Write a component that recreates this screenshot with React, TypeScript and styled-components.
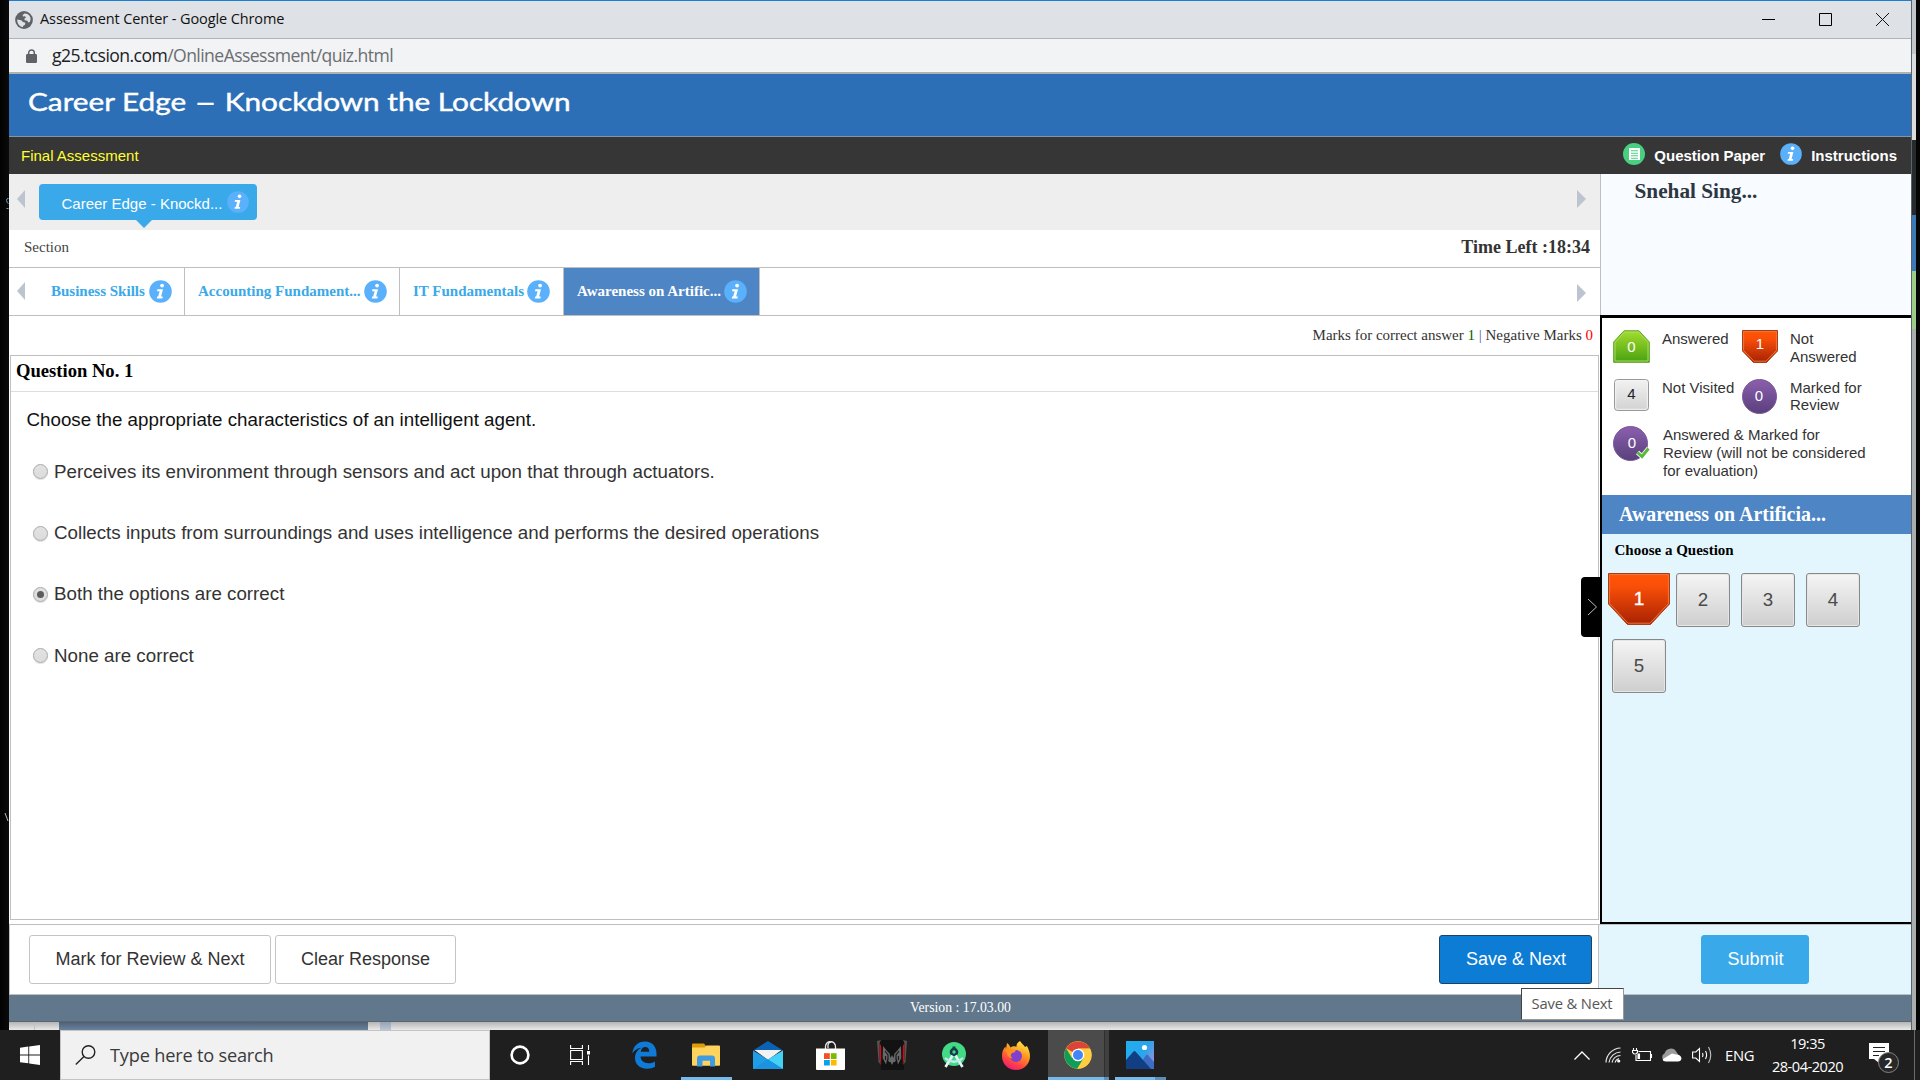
import React from 'react';
import styled, { createGlobalStyle, css } from 'styled-components';

const ARIAL = '"Liberation Sans", Arial, sans-serif';
const TIMES = '"Liberation Serif", "Times New Roman", serif';
const SEGOE = '"Open Sans", "Segoe UI", sans-serif';

const GlobalStyle = createGlobalStyle`
  * { box-sizing: border-box; }
  html, body { margin: 0; padding: 0; background: #050505; overflow: hidden; }
  svg { display: block; flex: none; }
`;

const Screen = styled.div`
  width: 1920px;
  height: 1080px;
  display: flex;
  flex-direction: column;
  background: #050505;
  overflow: hidden;
`;

const Desktop = styled.div`
  display: flex;
  height: 1030px;
`;

const LeftEdge = styled.div`
  width: 9px;
  background: linear-gradient(90deg, #020202, #0b0a0a);
  padding-top: 196px;
`;

const RightEdge = styled.div`
  width: 5px;
  display: flex;
  flex-direction: column;
  border-left: 1px solid #59636b;
`;

const Strip = styled.div<{ $h: number; $bg: string }>`
  height: ${(p) => p.$h}px;
  background: ${(p) => p.$bg};
`;

const WindowColumn = styled.div`
  width: 1902px;
  display: flex;
  flex-direction: column;
`;

const TitleBar = styled.div`
  height: 39px;
  border-top: 1px solid #1a80d6;
  border-bottom: 1px solid #b2b2b2;
  background: #dee1e6;
  display: flex;
  align-items: center;
  padding-left: 6px;
`;

const WindowTitle = styled.div`
  flex: 1;
  margin: -1px 0 0 7px;
  font: 14.5px/20px ${SEGOE};
  letter-spacing: -0.1px;
  color: #111;
`;

const WindowControls = styled.div`
  display: flex;
  gap: 44px;
  padding-right: 22px;
`;

const AddressBar = styled.div`
  height: 35px;
  background: #f1f3f4;
  border-bottom: 2px solid #b0b2b0;
  box-shadow: inset 0 -1px 0 #f7f7f7;
  display: flex;
  align-items: center;
  padding: 0 0 0 17px;
`;

const Url = styled.div`
  margin: -1px 0 0 15px;
  font: 17.6px/24px ${SEGOE};
  letter-spacing: -0.57px;
  color: #6b6e72;
  b { font-weight: 400; color: #202124; }
`;

const Banner = styled.div`
  height: 63px;
  background: #2c6fb6;
  border-bottom: 1px solid #8196a6;
  padding: 8px 0 0 19px;
  font: 25px/38px Lato, Carlito, sans-serif;
  color: #fff;
  -webkit-text-stroke: 0.4px #fff;
`;

const BannerTitle = styled.span`
  display: inline-block;
  transform: scaleX(1.189);
  transform-origin: left;
  white-space: nowrap;
`;

const Dash = styled.span`
  font-size: 34px;
  line-height: 0;
  vertical-align: -3px;
  -webkit-text-stroke: 0;
`;

const DarkBar = styled.div`
  height: 37px;
  background: #363636;
  display: flex;
  align-items: center;
  padding: 0 14px 0 12px;
  font: 15px/18px ${ARIAL};
`;

const ExamName = styled.div`
  flex: 1;
  color: #ffff32;
`;

const HeaderLink = styled.div<{ $ml?: number }>`
  display: flex;
  align-items: center;
  gap: 9px;
  margin-left: ${(p) => p.$ml || 0}px;
  font-weight: 700;
  color: #fff;
  svg { margin-top: -4px; }
`;

const Body = styled.div`
  height: 750px;
  display: flex;
  background: #fff;
`;

const Main = styled.div`
  width: 1591px;
  display: flex;
  flex-direction: column;
`;

const GroupBar = styled.div`
  height: 56px;
  background: #eee;
  display: flex;
  padding: 10px 14px 0 8px;
`;

const Arrow = styled.div<{ $right?: boolean; $mt?: number }>`
  flex: none;
  width: 0;
  height: 0;
  margin-top: ${(p) => p.$mt || 0}px;
  border: 9px solid transparent;
  ${(p) => (p.$right
    ? css`border-left-color: #bcc5cf; border-right-width: 0; margin-left: auto;`
    : css`border-right-color: #bcc5cf; border-left-width: 0; border-right-width: 8px;`)}
`;

const GroupTab = styled.div`
  position: relative;
  width: 218px;
  height: 36px;
  margin-left: 14px;
  border-radius: 4px;
  background: #39a9ea;
  color: #fff;
  font: 15px/18px ${ARIAL};
  display: flex;
  align-items: center;
  padding-left: 22.5px;
  gap: 4.5px;
  span { padding-top: 3px; }
  &::after {
    content: '';
    position: absolute;
    left: 97px;
    top: 36px;
    border: 8px solid transparent;
    border-top-color: #39a9ea;
    border-bottom-width: 0;
  }
`;

const SectionBar = styled.div`
  height: 38px;
  border-bottom: 1px solid #bfbfbf;
  display: flex;
  justify-content: space-between;
  align-items: center;
  padding: 0 10px 4px 15px;
  font: 15px/18px ${TIMES};
  color: #444;
`;

const TimeLeft = styled.div`
  font: 700 18px/20px ${TIMES};
  color: #333;
`;

const TabBar = styled.div`
  height: 48px;
  border-bottom: 1px solid #bfbfbf;
  display: flex;
  padding: 0 14px 0 8px;
`;

const Tab = styled.div<{ $active?: boolean; $first?: boolean; $w: number }>`
  width: ${(p) => p.$w}px;
  height: 47px;
  display: flex;
  align-items: center;
  gap: ${(p) => (p.$first ? 4 : 3)}px;
  padding-left: ${(p) => (p.$first ? 26 : 13)}px;
  border-right: 1px solid #bfbfbf;
  font: 700 15px/18px ${TIMES};
  white-space: nowrap;
  color: ${(p) => (p.$active ? '#fff' : '#39a9ea')};
  background: ${(p) => (p.$active ? '#4d85c5' : '#fff')};
  span { margin-top: -2px; }
`;

const MarksRow = styled.div`
  height: 39px;
  padding: 10px 7px 0 0;
  text-align: right;
  font: 15px/18px ${TIMES};
  color: #333;
  i { font-style: normal; color: #060; }
  u { text-decoration: none; color: #55b; }
  em { font-style: normal; color: #f00; }
`;

const QuestionBox = styled.div`
  height: 565px;
  margin: 0 1px;
  border: 1px solid #bfbfbf;
  background: #fff;
`;

const QuestionHead = styled.div`
  height: 36px;
  border-bottom: 1px solid #ddd;
  padding: 4px 0 0 5px;
  font: 700 18.6px/22px ${TIMES};
  color: #000;
`;

const QuestionText = styled.div`
  padding: 16px 0 0 15.5px;
  font: 18.75px/24px ${ARIAL};
  color: #111;
`;

const Options = styled.div`
  padding: 9px 0 0 22px;
`;

const Option = styled.div`
  display: flex;
  align-items: center;
  height: 61.4px;
  gap: 6px;
  font: 18.75px/24px ${ARIAL};
  color: #333;
`;

const Radio = styled.span<{ $on?: boolean }>`
  width: 15px;
  height: 15px;
  border: 1px solid #a9a9a9;
  border-radius: 50%;
  display: flex;
  align-items: center;
  justify-content: center;
  background: linear-gradient(#e2e2e2, #dcdcdc);
  box-shadow: 0 1px 1px rgba(0, 0, 0, 0.12);
  &::after {
    content: '';
    width: 7px;
    height: 7px;
    border-radius: 50%;
    background: ${(p) => (p.$on ? '#5c5c5c' : 'transparent')};
  }
`;

const SidePanel = styled.div`
  width: 311px;
  position: relative;
`;

const Candidate = styled.div`
  height: 141px;
  border-left: 1px solid #bfbfbf;
  background: #f8fbff;
  padding: 4px 0 0 33.5px;
  font: 700 21.25px/26px ${TIMES};
  color: #2d3740;
`;

const Palette = styled.div`
  height: 609px;
  border: solid #000;
  border-width: 3px 0 2px 2px;
  background: #e4f6fd;
`;

const Legend = styled.div`
  height: 177px;
  background: #fff;
  display: grid;
  grid-template-columns: 49px 80px 48px 110px;
  grid-template-rows: 49px 47px 60px;
  padding: 12px 0 0 11px;
  font: 15px/18px ${ARIAL};
  color: #333;
`;

const LegendText = styled.div<{ $wide?: boolean; $tight?: boolean }>`
  white-space: pre;
  ${(p) => p.$tight && css`line-height: 17px; margin-top: 0;`}
  ${(p) => p.$wide && css`grid-column: span 3; padding-left: 1px;`}
`;

const PaletteTitle = styled.div`
  height: 39px;
  background: #4d85c5;
  padding-left: 17px;
  font: 700 19.95px/38px ${TIMES};
  color: #fff;
`;

const PaletteHint = styled.div`
  padding: 7px 0 0 12.5px;
  font: 700 15px/18px ${TIMES};
  color: #000;
`;

const Numbers = styled.div`
  display: grid;
  grid-template-columns: 63px 65px 65px 65px;
  grid-auto-rows: 66px;
  padding: 14px 0 0 6px;
`;

const NumberButton = styled.div`
  width: 54px;
  height: 54px;
  margin-left: 5px;
  border: 1px solid #888;
  border-radius: 3px;
  background: linear-gradient(#f5f5f5, #cecece);
  box-shadow: inset 0 0 0 1px #e6e6e6;
  font: 18.75px/51px ${ARIAL};
  text-align: center;
  color: #4a4a4a;
  &:last-child { margin-left: 4px; }
`;

const Handle = styled.div`
  position: absolute;
  left: -19px;
  top: 403px;
  width: 19px;
  height: 60px;
  border-radius: 4px 0 0 4px;
  background: #000;
  display: flex;
  align-items: center;
  justify-content: flex-end;
  padding-right: 2px;
`;

const Actions = styled.div`
  height: 71px;
  display: flex;
  border: solid #bfbfbf;
  border-width: 1px 0 1px 1px;
  background: #fff;
`;

const ActionsLeft = styled.div`
  width: 1589px;
  display: flex;
  padding: 10px 6px 0 19px;
  border-right: 1px solid #bfbfbf;
`;

const ActionsRight = styled.div`
  flex: 1;
  background: #e4f6fd;
  padding: 10px 0 0 102px;
`;

const Button = styled.div<{ $w: number; $kind?: 'save' | 'submit'; $ml?: string }>`
  width: ${(p) => p.$w}px;
  height: 49px;
  margin-left: ${(p) => p.$ml || '0'};
  border: 1px solid #c4c4c4;
  border-radius: 3px;
  background: #fff;
  color: #333;
  font: 18px/47px ${ARIAL};
  text-align: center;
  ${(p) => p.$kind === 'save' && css`background: #0c7cd5; border-color: #20415f; color: #fff; padding-left: 1px;`}
  ${(p) => p.$kind === 'submit' && css`background: #39a9ea; border-color: #39a9ea; color: #fff; padding-left: 1px;`}
`;

const Footer = styled.div`
  position: relative;
  height: 27px;
  background: #61788c;
  border-bottom: 1px solid #596671;
  padding-left: 1px;
  text-align: center;
  font: 13.75px/25px ${TIMES};
  color: #fff;
`;

const Tooltip = styled.div`
  position: absolute;
  left: 1512px;
  top: -7px;
  width: 103px;
  height: 32px;
  border: 1px solid #bbb;
  border-color: #444 #999 #999 #444;
  background: #fff;
  padding-right: 1px;
  font: 14.8px/29px ${SEGOE};
  letter-spacing: -0.2px;
  color: #575757;
`;

const Behind = styled.div`
  height: 8px;
  display: flex;
  background: linear-gradient(#b5b5b5, #e9e9e9);
`;

const BehindBlock = styled.div<{ $ml: number; $w: number; $bg: string }>`
  margin-left: ${(p) => p.$ml}px;
  width: ${(p) => p.$w}px;
  background: ${(p) => p.$bg};
`;

const Taskbar = styled.div`
  height: 50px;
  background: #1f1f1f;
  display: flex;
`;

const StartCell = styled.div`
  width: 60px;
  padding: 15px 0 0 20px;
`;

const SearchBox = styled.div`
  width: 430px;
  background: #f1f1f1;
  border: 1px solid #c4c4c4;
  display: flex;
  align-items: center;
  padding-left: 14px;
  gap: 14px;
  font: 18.2px/24px ${SEGOE};
  letter-spacing: -0.2px;
  color: #3a3a3a;
`;

const Cell = styled.div<{ $w?: number; $ml?: number; $active?: boolean; $run?: boolean; $multi?: boolean }>`
  width: ${(p) => p.$w || 62}px;
  margin-left: ${(p) => p.$ml || 0}px;
  height: 50px;
  display: flex;
  align-items: center;
  justify-content: center;
  ${(p) => p.$run && css`
    background: linear-gradient(90deg, #76b9ed ${p.$multi ? '40px' : '100%'}, #5a8fbb 0) 6px 47px / 51px 3px no-repeat;
  `}
  ${(p) => p.$active && css`
    background: linear-gradient(90deg, #76b9ed 56px, #5a8fbb 0) 1px 47px / 61px 3px no-repeat,
      linear-gradient(90deg, transparent 1px, #4b4b4b 1px, #4b4b4b 57px, #303030 57px, #303030 58px, #404040 58px);
  `}
`;

const Tray = styled.div`
  margin-left: auto;
  display: flex;
  align-items: center;
  color: #fff;
  font: 15px/20px ${SEGOE};
`;

const TrayIcon = styled.div<{ $w: number }>`
  width: ${(p) => p.$w}px;
`;

const Lang = styled.div`
  width: 41px;
  font-size: 14.8px;
  letter-spacing: -0.3px;
`;

const Clock = styled.div`
  width: 83px;
  text-align: center;
  font: 14.6px/23px ${SEGOE};
  letter-spacing: -0.5px;
  white-space: nowrap;
`;

const NoticeCell = styled.div`
  width: 65px;
  padding: 5px 0 0 20px;
`;

const ShowDesktop = styled.div`
  height: 50px;
  width: 6px;
  border-left: 1px solid #6b6b6b;
`;

const InfoIcon = ({ size = 23 }: { size?: number }) => (
  <svg width={size} height={size} viewBox="0 0 23 23">
    <circle cx="11.5" cy="11.5" r="11.3" fill="#5bb0fb" />
    <circle cx="13.1" cy="5.6" r="1.9" fill="#fff" />
    <path d="M8.4 9.3h5.600l-1.900 7.300h1.700l-.4 1.900H7.800l.4-1.900h1l1.400-5.400H8z" fill="#fff" />
  </svg>
);

const PaperIcon = () => (
  <svg width="22" height="22" viewBox="0 0 22 22">
    <circle cx="11" cy="11" r="11" fill="#48cf80" />
    <path d="M6 5h11v12H6z" fill="#fff" />
    <path d="M8 7.7h7M8 10.2h7M8 12.7h7M8 15.2h7" stroke="#48cf80" strokeWidth="1.1" />
  </svg>
);

const GlobeIcon = () => (
  <svg width="18" height="18" viewBox="0 0 18 18">
    <circle cx="9" cy="9" r="8.9" fill="#5f6368" />
    <path d="M9.500 2.500C12 2.300 14.500 4 15.300 6.300c.5 1.700.3 3-.5 4.700l-1.500.500-1-1.800-2.600-.4-.3-1.800 1.800-1-1.300-1.300-2 .3-.2-1.500z" fill="#dee1e6" />
    <path d="M2.200 8.500l4 .8 1.800 1.800 2.400.7-.4 1.900-1.700 1-.6 1.500C4.500 15.500 2 12.500 2.200 8.500z" fill="#dee1e6" />
  </svg>
);

const LockIcon = () => (
  <svg width="11" height="14" viewBox="0 0 11 14">
    <rect x="0" y="5" width="11" height="9" rx="1.2" fill="#5f6368" />
    <path d="M2.700 5.500V3.700a2.800 2.800 0 0 1 5.600 0v1.800" fill="none" stroke="#5f6368" strokeWidth="1.5" />
  </svg>
);

const badgeText = { fontFamily: ARIAL, textAnchor: 'middle' as const };

const GreenBadge = () => (
  <svg width="37" height="33" viewBox="0 0 37 33">
    <defs>
      <linearGradient id="green" x2="0" y2="1"><stop offset="0" stopColor="#a5dc2c" /><stop offset="1" stopColor="#48a112" /></linearGradient>
    </defs>
    <path d="M11 .8h15L36.300 12v20.300H.700V12z" fill="url(#green)" stroke="#5da320" />
    <path d="M11.500 2.200h14L35 12.500V31H2V12.500z" fill="none" stroke="#a6dc6b" />
    <text x="18.500" y="22" fontSize="15" fill="#fff" {...badgeText}>0</text>
  </svg>
);

const RedBadge = ({ large }: { large?: boolean }) => (
  <svg width={large ? 62 : 36} height={large ? 52 : 33} viewBox={large ? '0 0 62 52' : '0 0 36 33'}>
    <defs>
      <linearGradient id="red" x2="0" y2="1"><stop offset="0" stopColor="#ff5507" /><stop offset="0.25" stopColor="#fa4f08" /><stop offset="1" stopColor="#a72203" /></linearGradient>
    </defs>
    {large ? (
      <>
        <path d="M.5.5h61V31L42.500 51.500h-23L.500 31z" fill="url(#red)" stroke="#b03a12" />
        <path d="M1.600 1.600h58.800V30.600L42 50.200H20L1.600 30.600z" fill="none" stroke="#e9783f" />
        <text x="31" y="32" fontSize="19" fill="#fff" stroke="#fff" strokeWidth=".4" {...badgeText}>1</text>
      </>
    ) : (
      <>
        <path d="M.5.5h35V21L24.500 32.500h-13L.500 21z" fill="url(#red)" stroke="#b03a12" />
        <path d="M1.600 1.600h32.800V20.600L24 31.200H12L1.600 20.600z" fill="none" stroke="#e9783f" />
        <text x="18" y="19" fontSize="15" fill="#fff" {...badgeText}>1</text>
      </>
    )}
  </svg>
);

const GreyBadge = () => (
  <svg width="37" height="32" viewBox="0 0 37 32">
    <defs>
      <linearGradient id="grey" x2="0" y2="1"><stop offset="0" stopColor="#f2f2f2" /><stop offset="1" stopColor="#d2d2d2" /></linearGradient>
    </defs>
    <rect x="1.500" y=".5" width="34" height="31" rx="3" fill="url(#grey)" stroke="#999" />
    <rect x="2.700" y="1.700" width="31.600" height="28.600" rx="2" fill="none" stroke="#f3f3f3" />
    <text x="18.500" y="20" fontSize="15" fill="#222" {...badgeText}>4</text>
  </svg>
);

const PurpleBadge = ({ check }: { check?: boolean }) => (
  <svg width="37" height="36" viewBox="0 0 37 36">
    <defs>
      <linearGradient id="purple" x2="0" y2="1"><stop offset="0" stopColor="#8b5fae" /><stop offset="1" stopColor="#59407c" /></linearGradient>
    </defs>
    <circle cx="17.500" cy="17.500" r="17" fill="url(#purple)" stroke="#7a5699" />
    <text x={check ? 19 : 17} y="21.500" fontSize="15" fill="#fff" {...badgeText}>0</text>
    {check && (
      <>
        <path d="M24.500 26.500l4.500 4L35.500 22.500" fill="none" stroke="#fff" strokeWidth="4.500" />
        <path d="M24.500 26.500l4.500 4L35.500 22.500" fill="none" stroke="#5cb83c" strokeWidth="3" />
      </>
    )}
  </svg>
);

const WindowsLogo = () => (
  <svg width="20" height="20" viewBox="0 0 20 20" fill="#fff">
    <path d="M0 2.800L8.300 1.600v7.900H0zM9.200 1.500L20 0v9.500H9.200zM0 10.400h8.300v7.900L0 17.200zM9.200 10.400H20V20L9.200 18.500z" />
  </svg>
);

const SearchIcon = () => (
  <svg width="21" height="20" viewBox="0 0 21 20" fill="none" stroke="#222" strokeWidth="1.400">
    <circle cx="13.500" cy="7" r="6.300" />
    <path d="M9 11.600L.8 19.400" />
  </svg>
);

const TaskViewIcon = () => (
  <svg width="20" height="20" viewBox="0 0 20 20" fill="none" stroke="#fff" strokeWidth="1.100">
    <path d="M.6 0v3.500h11.800V0M.6 20v-3.500h11.800V20M.6 5.500h11.800v9H.6zM18.500 0v5M18.500 10.500V20" />
    <path d="M17 6h3v3.500h-3z" fill="#fff" stroke="none" />
  </svg>
);

const EdgeIcon = () => (
  <svg width="25" height="28" viewBox="0 0 25 28">
    <path d="M.3 12.300C1.300 5 6 .500 13 .500c7.500 0 11.500 5.500 11.500 12.300v2.700H8.600c.2 4.700 3.800 6.700 7.700 6.700 3 0 5.200-.8 6.700-1.800v5.400c-2 1.200-4.800 1.900-8 1.900C7.500 27.700 3 23 3 17c0-5 2.800-8.600 6.500-10.300C5.500 7 2.300 9.300.3 12.300zM8.800 10.700h8.500c0-3-1.300-4.700-4-4.700-2.500 0-4.200 1.900-4.500 4.700z" fill="#0f7bd7" />
  </svg>
);

const ExplorerIcon = () => (
  <svg width="28" height="24" viewBox="0 0 28 24">
    <path d="M0 1.500Q0 .500 1 .500h11l2 2.500v3H0z" fill="#dd9d08" />
    <path d="M0 4.500h12.500l2-2H27q1 0 1 1V22q0 .8-.8.800H.8q-.8 0-.8-.8z" fill="#ffd35c" />
    <path d="M5 23.500v-8q0-3 3-3h12q3 0 3 3v8h-5V17.800h-7.500v5.700z" fill="#3f9be2" />
  </svg>
);

const MailIcon = () => (
  <svg width="30" height="28" viewBox="0 0 30 28">
    <path d="M0 9.500L15 0l15 9.500z" fill="#0b62b4" />
    <path d="M1.500 9h27L15 19z" fill="#f2f2f2" />
    <path d="M0 9.500l15 9 15-9V28H0z" fill="#1f9de6" />
    <path d="M15 18.500l15-9V28z" fill="#45d1f6" />
    <path d="M0 28L15 18.500 30 28z" fill="#1b93e0" />
  </svg>
);

const StoreIcon = () => (
  <svg width="29" height="29" viewBox="0 0 29 29">
    <path d="M9.500 8V5.500a5 5 0 0 1 10 0V8M12 7V5a3.500 3.500 0 0 1 7-1" fill="none" stroke="#e5e5e5" strokeWidth="1.300" />
    <path d="M0 7.500h29V28q0 1-1 1H1q-1 0-1-1z" fill="#fff" />
    <path d="M8 12.200h5.800V18H8z" fill="#f25022" />
    <path d="M14.800 12.200h5.800V18h-5.800z" fill="#7fba00" />
    <path d="M8 19h5.800v5.500H8z" fill="#00a4ef" />
    <path d="M14.800 19h5.800v5.500h-5.800z" fill="#ffb900" />
  </svg>
);

const PredatorIcon = () => (
  <svg width="30" height="30" viewBox="0 0 30 30">
    <path d="M3 0h24v30H4z" fill="#121212" />
    <path d="M0 1l4-1-1.500 3v16L4 25 1.500 22zM30 1l-4-1 1.500 3v16L26 25l2.500-3z" fill="#555" />
    <path d="M2.500 3v16l1.700 5.500V6zM27.500 3v16l-1.700 5.500V6z" fill="#c5131a" />
    <path d="M6 6l4 5 2.500 2.500L13.500 18l1.500-3 1.500 3 1-4.500L20 11l4-5 .3 12-3.300 6.500-1.300-6-1.700 3.500-1.500 0L15 25l-1.500-3H12l-1.700-3.500-1.300 6L5.700 18z" fill="#686868" />
    <path d="M8 11l3 4v5M22 11l-3 4v5M8.500 16v4M21.500 16v4" fill="none" stroke="#1c1c1c" strokeWidth="1.200" />
  </svg>
);

const AndroidStudioIcon = () => (
  <svg width="24" height="28" viewBox="0 0 24 28">
    <circle cx="12" cy="13" r="12" fill="#43da86" />
    <path d="M10.500 5.500h3v3h-3z" fill="#163b4a" />
    <circle cx="12" cy="11" r="3" fill="none" stroke="#163b4a" strokeWidth="2.600" />
    <path d="M10.500 14.500L3.500 26M13.500 14.500L20.500 26" stroke="#e4f3f5" strokeWidth="2.600" />
    <path d="M3 17q9 7.500 18 0" fill="none" stroke="#c3e8ef" strokeWidth="2.200" />
  </svg>
);

const FirefoxIcon = () => (
  <svg width="28" height="29" viewBox="0 0 28 29">
    <defs>
      <linearGradient id="fox" x1=".8" y1="0" x2=".3" y2="1"><stop offset="0" stopColor="#fff04a" /><stop offset=".4" stopColor="#ff9a22" /><stop offset=".75" stopColor="#ff4540" /><stop offset="1" stopColor="#ee1780" /></linearGradient>
    </defs>
    <path d="M18 0c2 3 4 4 5 6l2-1c2 4 3 7 3 10 0 8-6 14-14 14S0 23 0 15c0-4 1-7 3.500-9.500L4 8l1-6c2 1 2.500 3 3.500 4.500 2-1.500 5-1.500 6-.5C14 3.500 16 1 18 0z" fill="url(#fox)" />
    <circle cx="14" cy="15" r="6" fill="#8040cf" />
    <path d="M3 9q5-2.500 11 .5-1 2-4 2.500-3 3 1 5.500-6-1-6-6z" fill="#ff921e" />
  </svg>
);

const ChromeIcon = () => (
  <svg width="28" height="28" viewBox="0 0 28 28">
    <circle cx="14" cy="14" r="13.700" fill="#ffcd40" />
    <path d="M14 14L2.100 7.200A13.700 13.700 0 0 1 25.900 7.500H14z" fill="#db4437" />
    <path d="M2.100 7.200A13.700 13.700 0 0 0 13.300 27.700L19.500 17.500 14 14 8 17z" fill="#0f9d58" />
    <path d="M14 7.700h11.900A13.700 13.700 0 0 1 13.300 27.700L20 17z" fill="#ffcd40" />
    <circle cx="14" cy="14" r="6.300" fill="#fff" />
    <circle cx="14" cy="14" r="5" fill="#4285f4" />
  </svg>
);

const PhotosIcon = () => (
  <svg width="28" height="28" viewBox="0 0 28 28">
    <defs>
      <linearGradient id="sky" x2="1" y2=".6"><stop offset="0" stopColor="#23aef0" /><stop offset=".65" stopColor="#27a6ec" /><stop offset="1" stopColor="#8c8fe0" /></linearGradient>
    </defs>
    <rect width="28" height="28" fill="url(#sky)" />
    <path d="M11 28l9-14q.8-1 1.800 0L28 21v7z" fill="#3d6cc4" />
    <path d="M0 19L7.500 10.500q1-1 2 0L25 28H0z" fill="#123f83" />
    <circle cx="18.500" cy="6.500" r="2.600" fill="#fff" />
  </svg>
);

const WifiIcon = () => (
  <svg width="16" height="16" viewBox="0 0 16 16" fill="none" stroke="#e8e8e8" strokeWidth="1.200">
    <path d="M1 15.500A15 15 0 0 1 15.500 1M4 15.500A12 12 0 0 1 15.500 5M7 15.500A9 9 0 0 1 15.500 8.500M10 15.500A6 6 0 0 1 14 11.500" />
    <circle cx="13.700" cy="14" r="1.600" fill="#fff" stroke="none" />
  </svg>
);

const BatteryIcon = () => (
  <svg width="21" height="14" viewBox="0 0 21 14" fill="none" stroke="#fff" strokeWidth="1.100">
    <path d="M6.500 3.500h12v9H4V7M19.500 6v4M1.500 0v2.500M4.500 0v2.500" />
    <path d="M.5 2.500h5v2L4 6H2L.500 4.500z" />
    <path d="M6 6h1.500v4.500H6z" fill="#fff" />
  </svg>
);

const CloudIcon = () => (
  <svg width="21" height="14" viewBox="0 0 21 14">
    <path d="M4 13a4 4 0 0 1-.5-7.500A6.500 6.500 0 0 1 15.500 4L18 8 8 13z" fill="#9b9b9b" />
    <path d="M5 13.500q-3.500 0-3-2.500l9-5.500 4 1q5 0 5.500 4-.5 3-3.500 3z" fill="#fff" />
  </svg>
);

const SpeakerIcon = () => (
  <svg width="21" height="18" viewBox="0 0 21 18" fill="none" stroke="#fff" strokeWidth="1.100">
    <path d="M.6 6h3.200L7.500 2.500v13L3.800 12H.6z" />
    <path d="M10.500 7q1 2 0 4M13.500 5q2.200 4 0 8" />
    <path d="M16.500 1q4.500 8 0 16" stroke="#c5c5c5" />
  </svg>
);

const NoticeIcon = () => (
  <svg width="32" height="32" viewBox="0 0 32 32">
    <path d="M0 1h20v16H10v4l-5-4H0z" fill="#fff" />
    <path d="M4 5.500h12M4 9.500h12M4 13.500h6" stroke="#222" strokeWidth="1.200" />
    <circle cx="19.500" cy="20.500" r="10" fill="#282828" stroke="#858585" />
    <text x="19.300" y="25.500" fontSize="14.500" fontWeight="600" fill="#fff" fontFamily="Open Sans, sans-serif" textAnchor="middle">2</text>
  </svg>
);

const options = [
  'Perceives its environment through sensors and act upon that through actuators.',
  'Collects inputs from surroundings and uses intelligence and performs the desired operations',
  'Both the options are correct',
  'None are correct',
];

const tabs = [
  { label: 'Business Skills', w: 160 },
  { label: 'Accounting Fundament...', w: 215 },
  { label: 'IT Fundamentals', w: 164 },
  { label: 'Awareness on Artific...', w: 196 },
];

export default function App() {
  return (
    <Screen>
      <GlobalStyle />
      <Desktop>
        <LeftEdge>
          <svg width="9" height="630" viewBox="0 0 9 630" fill="none">
            <path d="M8.500 2.500Q6.500 2 6.600 4.500T8.500 7.500M6.500 12.500h2" stroke="#7d9bc4" />
            <path d="M5 617l3 8" stroke="#bbb" />
          </svg>
        </LeftEdge>
        <WindowColumn>
          <TitleBar>
            <GlobeIcon />
            <WindowTitle>Assessment Center - Google Chrome</WindowTitle>
            <WindowControls>
              <svg width="13" height="13" viewBox="0 0 13 13"><path d="M0 6.500h13" stroke="#000" /></svg>
              <svg width="13" height="13" viewBox="0 0 13 13"><path d="M.5.5h12v12H.5z" fill="none" stroke="#000" /></svg>
              <svg width="13" height="13" viewBox="0 0 13 13"><path d="M0 0l13 13M13 0L0 13" stroke="#111" /></svg>
            </WindowControls>
          </TitleBar>
          <AddressBar>
            <LockIcon />
            <Url><b>g25.tcsion.com</b>/OnlineAssessment/quiz.html</Url>
          </AddressBar>
          <Banner><BannerTitle>Career Edge <Dash>–</Dash> Knockdown the Lockdown</BannerTitle></Banner>
          <DarkBar>
            <ExamName>Final Assessment</ExamName>
            <HeaderLink><PaperIcon />Question Paper</HeaderLink>
            <HeaderLink $ml={15}><InfoIcon size={22} />Instructions</HeaderLink>
          </DarkBar>
          <Body>
            <Main>
              <GroupBar>
                <Arrow $mt={6} />
                <GroupTab><span>Career Edge - Knockd...</span><InfoIcon size={22} /></GroupTab>
                <Arrow $right $mt={6} />
              </GroupBar>
              <SectionBar>
                <span>Section</span>
                <TimeLeft>Time Left :18:34</TimeLeft>
              </SectionBar>
              <TabBar>
                <Arrow $mt={14} />
                {tabs.map((t, i) => (
                  <Tab key={t.label} $w={t.w} $first={i === 0} $active={i === 3}>
                    <span>{t.label}</span>
                    <InfoIcon />
                  </Tab>
                ))}
                <Arrow $right $mt={16} />
              </TabBar>
              <MarksRow>Marks for correct answer <i>1</i> <u>|</u> Negative Marks <em>0</em></MarksRow>
              <QuestionBox>
                <QuestionHead>Question No. 1</QuestionHead>
                <QuestionText>Choose the appropriate characteristics of an intelligent agent.</QuestionText>
                <Options>
                  {options.map((o, i) => (
                    <Option key={o}><Radio $on={i === 2} />{o}</Option>
                  ))}
                </Options>
              </QuestionBox>
            </Main>
            <SidePanel>
              <Candidate>Snehal Sing...</Candidate>
              <Palette>
                <Legend>
                  <GreenBadge />
                  <LegendText>Answered</LegendText>
                  <RedBadge />
                  <LegendText>{'Not\nAnswered'}</LegendText>
                  <GreyBadge />
                  <LegendText>Not Visited</LegendText>
                  <PurpleBadge />
                  <LegendText $tight>{'Marked for\nReview'}</LegendText>
                  <PurpleBadge check />
                  <LegendText $wide>{'Answered & Marked for\nReview (will not be considered\nfor evaluation)'}</LegendText>
                </Legend>
                <PaletteTitle>Awareness on Artificia...</PaletteTitle>
                <PaletteHint>Choose a Question</PaletteHint>
                <Numbers>
                  <RedBadge large />
                  {[2, 3, 4, 5].map((n) => <NumberButton key={n}>{n}</NumberButton>)}
                </Numbers>
              </Palette>
              <Handle>
                <svg width="11" height="18" viewBox="0 0 11 18"><path d="M1 1l8.500 8L1 17" fill="none" stroke="#bbb" /></svg>
              </Handle>
            </SidePanel>
          </Body>
          <Actions>
            <ActionsLeft>
              <Button $w={242}>Mark for Review &amp; Next</Button>
              <Button $w={181} $ml="4px">Clear Response</Button>
              <Button $w={153} $ml="auto" $kind="save">Save &amp; Next</Button>
            </ActionsLeft>
            <ActionsRight>
              <Button $w={108} $kind="submit">Submit</Button>
            </ActionsRight>
          </Actions>
          <Footer>
            Version : 17.03.00
            <Tooltip>Save &amp; Next</Tooltip>
          </Footer>
          <Behind>
            <BehindBlock $ml={25} $w={1} $bg="#b9c2cf" />
            <BehindBlock $ml={24} $w={309} $bg="linear-gradient(#4f6075, #6b829c)" />
            <BehindBlock $ml={12} $w={11} $bg="linear-gradient(#97a3b0, #b8c6d6)" />
          </Behind>
        </WindowColumn>
        <RightEdge>
          <Strip $h={54} $bg="#c4c7ca" />
          <Strip $h={86} $bg="#dcdcdc" />
          <Strip $h={75} $bg="#262a2a" />
          <Strip $h={56} $bg="#3d79b6" />
          <Strip $h={58} $bg="#9ccd86" />
          <Strip $h={701} $bg="#a9adad" />
        </RightEdge>
      </Desktop>
      <Taskbar>
        <StartCell><WindowsLogo /></StartCell>
        <SearchBox><SearchIcon />Type here to search</SearchBox>
        <Cell $w={60}><svg width="20" height="20" viewBox="0 0 20 20"><circle cx="10" cy="10" r="8.400" fill="none" stroke="#fff" strokeWidth="2.600" /></svg></Cell>
        <Cell $w={60}><TaskViewIcon /></Cell>
        <Cell $ml={3}><EdgeIcon /></Cell>
        <Cell $run><ExplorerIcon /></Cell>
        <Cell><MailIcon /></Cell>
        <Cell><StoreIcon /></Cell>
        <Cell><PredatorIcon /></Cell>
        <Cell><AndroidStudioIcon /></Cell>
        <Cell><FirefoxIcon /></Cell>
        <Cell $active><ChromeIcon /></Cell>
        <Cell $run $multi><PhotosIcon /></Cell>
        <Tray>
          <TrayIcon $w={31}><svg width="16" height="9" viewBox="0 0 16 9"><path d="M.5 8.500L8 1l7.500 7.500" fill="none" stroke="#fff" strokeWidth="1.300" /></svg></TrayIcon>
          <TrayIcon $w={27}><WifiIcon /></TrayIcon>
          <TrayIcon $w={29}><BatteryIcon /></TrayIcon>
          <TrayIcon $w={31}><CloudIcon /></TrayIcon>
          <TrayIcon $w={33}><SpeakerIcon /></TrayIcon>
          <Lang>ENG</Lang>
          <Clock>19:35<br />28-04-2020</Clock>
          <NoticeCell><NoticeIcon /></NoticeCell>
          <ShowDesktop />
        </Tray>
      </Taskbar>
    </Screen>
  );
}
